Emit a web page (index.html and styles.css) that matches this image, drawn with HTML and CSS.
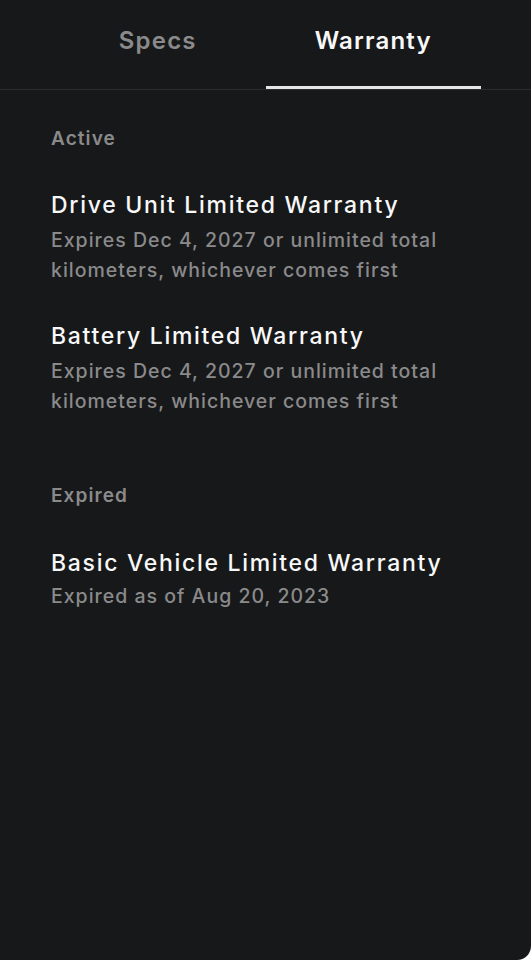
FILE: index.html
```html
<!DOCTYPE html>
<html lang="en">
<head>
<meta charset="utf-8">
<title>Warranty</title>
<link rel="stylesheet" href="styles.css">
</head>
<body>
<div class="screen">
  <nav class="tabs">
    <div class="tab">Specs</div>
    <div class="tab active">Warranty</div>
  </nav>
  <main class="content">
    <section class="group">
      <h2 class="label">Active</h2>
      <div class="item">
        <h3 class="title">Drive Unit Limited Warranty</h3>
        <p class="sub">Expires Dec 4, 2027 or unlimited total kilometers, whichever comes first</p>
      </div>
      <div class="item">
        <h3 class="title">Battery Limited Warranty</h3>
        <p class="sub">Expires Dec 4, 2027 or unlimited total kilometers, whichever comes first</p>
      </div>
    </section>
    <section class="group expired">
      <h2 class="label">Expired</h2>
      <div class="item">
        <h3 class="title">Basic Vehicle Limited Warranty</h3>
        <p class="sub">Expired as of Aug 20, 2023</p>
      </div>
    </section>
  </main>
</div>
</body>
</html>
```
FILE: styles.css
```css
html, body {
  margin: 0;
  padding: 0;
  background: #ffffff;
}
body {
  font-family: Inter, "Noto Sans", sans-serif;
  -webkit-font-smoothing: antialiased;
}
.screen {
  width: 531px;
  height: 960px;
  background: #17181a;
  border-bottom-right-radius: 14px;
  overflow: hidden;
}
.tabs {
  display: flex;
  padding: 0 50px;
  height: 89px;
  border-bottom: 1px solid #2b2c2e;
}
.tab {
  flex: 1;
  display: flex;
  justify-content: center;
  align-items: flex-start;
  padding-top: 25px;
  box-sizing: border-box;
  font-size: 24px;
  line-height: 32px;
  font-weight: 600;
  letter-spacing: 1.2px;
  color: #8a8a8b;
  border-bottom: 3px solid transparent;
}
.tab.active {
  color: #f8f8f8;
  border-bottom-color: #e6e6e7;
}
.content {
  padding: 34px 51px 0;
}
.label {
  margin: 0;
  font-size: 19px;
  line-height: 30px;
  font-weight: 600;
  letter-spacing: 1.1px;
  color: #8a8a8b;
}
.item {
  margin-top: 36px;
}
.title {
  margin: 0;
  font-size: 23px;
  line-height: 30px;
  font-weight: 500;
  letter-spacing: 1.7px;
  color: #f8f8f8;
}
.sub {
  margin: 5px 0 0;
  font-size: 19.5px;
  line-height: 30px;
  font-weight: 500;
  letter-spacing: 1px;
  color: #8a8a8b;
  max-width: 420px;
}
.group.expired {
  margin-top: 65px;
}
.group.expired .item {
  margin-top: 37px;
}
.group.expired .sub {
  margin-top: 3px;
}
```
